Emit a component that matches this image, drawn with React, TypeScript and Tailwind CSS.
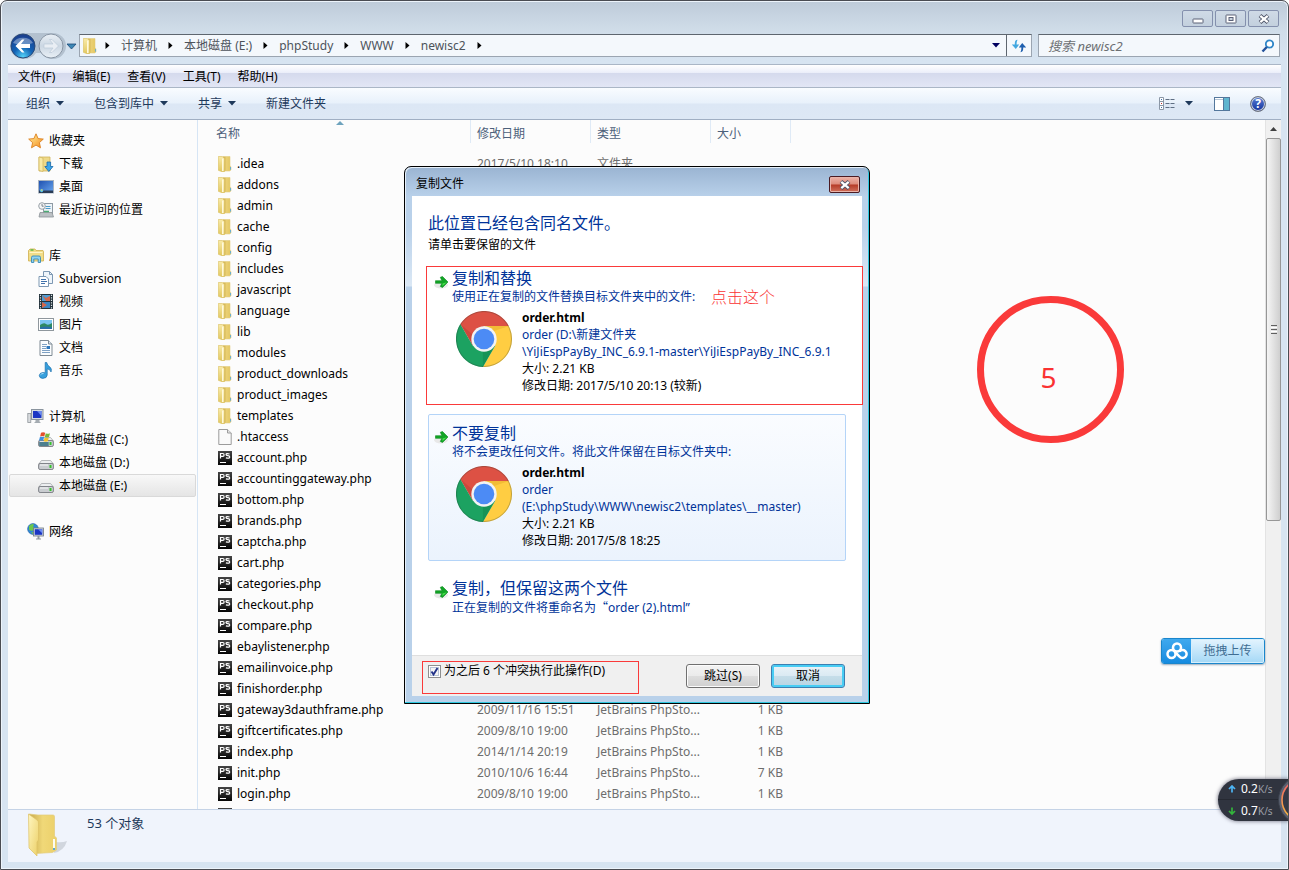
import React from "react";

type NavItem = { label: string; icon: React.ReactNode; child?: boolean; selected?: boolean };
type FileRow = { name: string; kind: "folder" | "blank" | "php"; date?: string; type?: string; size?: string };

const Caret = ({ className = "" }: { className?: string }) => (
  <svg className={className} width="8" height="5" viewBox="0 0 8 5" aria-hidden="true">
    <path d="M0 0h8L4 4.5z" fill="currentColor" />
  </svg>
);

const Crumb = () => (
  <svg width="5" height="7" viewBox="0 0 5 7" aria-hidden="true">
    <path d="M0.5 0v7L4.5 3.5z" fill="#000" />
  </svg>
);

const FolderIcon = () => (
  <svg width="14" height="16" viewBox="0 0 14 16" aria-hidden="true">
    <defs>
      <linearGradient id="fold" x1="0" x2="1">
        <stop offset="0" stopColor="#c9a949" />
        <stop offset=".45" stopColor="#ead074" />
        <stop offset="1" stopColor="#e3c55c" />
      </linearGradient>
      <linearGradient id="foldFront" x2="0" y2="1">
        <stop offset="0" stopColor="#f8eaa8" />
        <stop offset="1" stopColor="#e2c860" />
      </linearGradient>
    </defs>
    <path d="M5 .5h7V10l1 .8v3.200l-1.500 1H5z" fill="url(#fold)" stroke="#e2cd80" strokeWidth=".6" />
    <path d="M.3.5h4L6.500 2.500V15.700H4L.3 14.300z" fill="url(#foldFront)" stroke="#d9bd5c" strokeWidth=".6" />
    <path d="M4.800 2.500v12.500" stroke="#fffae0" strokeWidth="1.500" />
    <path d="M12.500 11v2.600" stroke="#6aaed0" strokeWidth="1" />
  </svg>
);

const PhpIcon = () => (
  <svg width="14" height="14" viewBox="0 0 14 14" aria-hidden="true">
    <defs>
      <linearGradient id="php" x2="0" y2="1">
        <stop offset="0" stopColor="#454545" />
        <stop offset="1" stopColor="#050505" />
      </linearGradient>
    </defs>
    <rect width="14" height="14" fill="url(#php)" />
    <path d="M2.500 7.500V2.500h2.300q1.300 0 1.300 1.400T4.800 5.300H2.500M11.600 3q-3.600-1.100-3.600.6 0 .9 1.900 1.100 1.800.2 1.800 1.200 0 1.900-3.800.9" fill="none" stroke="#fff" strokeWidth="1.200" />
    <path d="M2 11.500h6" stroke="#fff" strokeWidth="1" />
  </svg>
);

const BlankIcon = () => (
  <svg width="14" height="16" viewBox="0 0 14 16" aria-hidden="true">
    <path d="M.8.5h8.700L13.200 4v11.500H.8z" fill="#fafafa" stroke="#9c9c9c" />
    <path d="M9.500.5V4h3.700" fill="#e4e4e4" stroke="#9c9c9c" />
  </svg>
);

const StarIcon = () => (
  <svg width="16" height="16" viewBox="0 0 16 16" aria-hidden="true">
    <defs>
      <linearGradient id="star" x2="1" y2="1">
        <stop offset="0" stopColor="#fff3a0" />
        <stop offset="1" stopColor="#f58a1c" />
      </linearGradient>
    </defs>
    <path d="M8 .8l2.100 4.800 5.200.5-3.900 3.500 1.100 5.200L8 12.100l-4.500 2.700 1.100-5.200L.7 6.100l5.200-.5z" fill="url(#star)" stroke="#dd7f1d" strokeWidth=".9" />
  </svg>
);

const DownloadIcon = () => (
  <svg width="16" height="16" viewBox="0 0 16 16" aria-hidden="true">
    <path d="M1 1h11v14H1z" fill="#eed988" stroke="#d0b45a" strokeWidth=".8" />
    <path d="M1 1l4 1v13.500L1 14.500z" fill="#f8eaa6" stroke="#d0b45a" strokeWidth=".7" />
    <path d="M9 6h3.600v4.500H15L10.800 15.500 6.800 10.500H9z" fill="#3ea6ea" stroke="#1768ab" strokeWidth=".8" />
  </svg>
);

const DesktopIcon = () => (
  <svg width="16" height="14" viewBox="0 0 16 14" aria-hidden="true">
    <defs>
      <linearGradient id="desk" x2="1" y2="1">
        <stop offset="0" stopColor="#1d4fae" />
        <stop offset="1" stopColor="#6aa7ef" />
      </linearGradient>
    </defs>
    <rect x=".5" y=".5" width="15" height="12.500" fill="url(#desk)" stroke="#a9b4c0" />
    <path d="M1 10.500h14V13H1z" fill="#2a3c55" />
    <circle cx="3.600" cy="10.600" r="1.600" fill="#58c3e8" />
    <circle cx="3.800" cy="10" r=".8" fill="#f2d14a" />
  </svg>
);

const RecentIcon = () => (
  <svg width="16" height="16" viewBox="0 0 16 16" aria-hidden="true">
    <rect x="5.500" y="1.500" width="9" height="10" fill="#eef3f7" stroke="#8e9aa4" />
    <path d="M7.500 4.500h5M7.500 6.500h5" stroke="#4b9bc9" />
    <path d="M2 10.500h12l1.500 4.500H1z" fill="#bcc1c5" stroke="#8c9297" strokeWidth=".8" />
    <circle cx="4" cy="4" r="3.300" fill="#f5f6f7" stroke="#98a0a6" />
    <path d="M4 2v2.200h1.700" fill="none" stroke="#5e6a73" strokeWidth=".8" />
    <path d="M6 9.500h5" stroke="#4cab74" strokeWidth="1.400" />
  </svg>
);

const LibraryIcon = () => (
  <svg width="16" height="16" viewBox="0 0 16 16" aria-hidden="true">
    <path d="M.5 2.500 2 1h5l1 1.500h7l.5 1V13H.5z" fill="#f1dd88" stroke="#cfae4d" strokeWidth=".8" />
    <path d="M1.500 4.500h13" stroke="#fff6c8" />
    <path d="M2.500 2h3" stroke="#58b947" strokeWidth="1.500" />
    <path d="M3.500 14.500V9.500q0-1.500 1.500-1.500h6q1.500 0 1.500 1.500v5h-2.300V11H5.800v3.500z" fill="#8fd2f0" stroke="#378bb8" strokeWidth=".9" />
  </svg>
);

const SubversionIcon = () => (
  <svg width="16" height="16" viewBox="0 0 16 16" aria-hidden="true">
    <path d="M5.500.5h6l3 3v9h-9z" fill="#eff5fa" stroke="#7d98b3" />
    <path d="M11.500.5v3h3" fill="none" stroke="#7d98b3" />
    <path d="M1 5.500h7l2.500 2.500v7.500H1z" fill="#fff" stroke="#7d98b3" />
    <path d="M3 8.500h5M3 10.500h6M3 12.500h4" stroke="#4172ab" />
  </svg>
);

const VideoIcon = () => (
  <svg width="14" height="15" viewBox="0 0 14 15" aria-hidden="true">
    <rect width="14" height="15" fill="#23323a" />
    <path d="M3 1h8v6H3z" fill="#4e9ed5" />
    <path d="M3 8h8v6H3z" fill="#3a85c2" />
    <path d="M3 1l4 3 4-2v5H7z M3 8l5 3-5 3z" fill="#d3674a" />
    <path d="M1.500.8v14M12.500.8v14" stroke="#dfe6ea" strokeWidth="1.200" strokeDasharray="1.300 1.200" />
  </svg>
);

const PictureIcon = () => (
  <svg width="16" height="13" viewBox="0 0 16 13" aria-hidden="true">
    <rect x=".5" y=".5" width="15" height="12" fill="#fff" stroke="#8f979d" />
    <path d="M2 2h12v9H2z" fill="#7cc6f2" />
    <path d="M2 7q4-3 6-1t6-1v6H2z" fill="#2f8a64" />
    <path d="M2 9.500q6-2 12 0V11H2z" fill="#2a6fa9" />
  </svg>
);

const DocumentIcon = () => (
  <svg width="14" height="16" viewBox="0 0 14 16" aria-hidden="true">
    <path d="M1 .5h8.500l3.500 3.500v11.500H1z" fill="#fbfdfe" stroke="#7e8a94" />
    <path d="M9.500.5V4H13" fill="#dde6ed" stroke="#7e8a94" />
    <path d="M3 4.500h5M3 6.500h4M3 8.500h4M3 10.500h8M3 12.500h8" stroke="#7fa1c4" />
    <path d="M7.500 6h3.500v3H7.500z" fill="#2e78bd" />
  </svg>
);

const MusicIcon = () => (
  <svg width="15" height="17" viewBox="0 0 15 17" aria-hidden="true">
    <path d="M7.200.5h1.500q.5 3 3 4.300 2.600 2 1.300 5.200-.3-2.500-3.800-3.200v6.300q-.2 3.200-4.400 3.300Q1.300 16.300 1.300 13.500q.3-2.900 4-3 1 0 1.900.4z" fill="#37a0dd" stroke="#1a6fae" strokeWidth=".7" />
    <path d="M2.500 12.800q1-1.500 3-1.300" stroke="#aee0fa" fill="none" />
  </svg>
);

const ComputerIcon = () => (
  <svg width="17" height="15" viewBox="0 0 17 15" aria-hidden="true">
    <rect x=".8" y="4.500" width="3" height="9" fill="#d9dcdf" stroke="#8f959a" strokeWidth=".8" />
    <rect x="4.500" y=".5" width="11.500" height="10" fill="#d5dbe2" stroke="#8a949e" />
    <rect x="6" y="2" width="8.500" height="7" fill="#1b36c4" />
    <path d="M10 2h4.500v5z" fill="#6a8af0" />
    <path d="M8.500 11h4v1.500l1.500 1.500H7l1.500-1.500z" fill="#a5acb2" />
  </svg>
);

const DriveBody = () => (
  <>
    <path d="M3.500 5.500h9l3 3.500H.8z" fill="#eceef0" stroke="#a5a8ac" strokeWidth=".8" />
    <rect x=".6" y="8.500" width="14.800" height="6" rx="1.500" fill="#c9ccd0" stroke="#777b80" strokeWidth=".9" />
    <path d="M2 10h8" stroke="#f7f8f9" />
    <rect x="11.500" y="10" width="2" height="3" fill="#37c52c" />
  </>
);

const DriveIcon = () => (
  <svg width="16" height="16" viewBox="0 0 16 16" aria-hidden="true"><DriveBody /></svg>
);

const SystemDriveIcon = () => (
  <svg width="16" height="16" viewBox="0 0 16 16" aria-hidden="true">
    <DriveBody />
    <rect x="1.200" y="10" width="9.500" height="4" fill="#4d7f8e" />
    <path d="M3 .8q2-1 4.200 0L6.300 4.500q-2-.9-4.200 0z" fill="#e5502b" />
    <path d="M7.800 1.200q2 1 4.200 0L11 5q-2 .9-4.200 0z" fill="#79b93c" />
    <path d="M1.900 5.100q2-.9 4.200 0L5.200 8.800q-2-.9-4.200 0z" fill="#3e8fe0" />
    <path d="M6.600 5.500q2 1 4.200 0L9.900 9.200q-2 .9-4.200 0z" fill="#f3c22d" />
  </svg>
);

const NetworkIcon = () => (
  <svg width="17" height="17" viewBox="0 0 17 17" aria-hidden="true">
    <circle cx="6" cy="6" r="5.400" fill="#2f86d8" stroke="#1f5e9f" strokeWidth=".6" />
    <path d="M2 3q3-3 5-1.500L6 4l2 1-3 3-3-1zM4 9l3 .500-1 2z" fill="#6cc84b" />
    <rect x="6.500" y="5" width="10" height="8" fill="#d5dbe2" stroke="#6d7781" strokeWidth=".8" />
    <rect x="7.700" y="6.200" width="7.600" height="5.600" fill="#1b36c4" />
    <path d="M11 6.200h4.300v4z" fill="#6e8df2" />
    <path d="M10.500 13h2v2.500h1.500v1H9v-1h1.500z" fill="#8f979e" />
  </svg>
);

const ChromeIcon = () => (
  <svg width="56" height="56" viewBox="-28 -28 56 56" aria-hidden="true">
    <path d="M-23.700-15A28 28 0 0 1 24.800-13H0L-11.300 6.500z" fill="#dd5144" />
    <path d="M24.800-13A28 28 0 0 1-1.100 28L11.300 6.500 0-13z" fill="#ffcd42" />
    <path d="M-1.100 28A28 28 0 0 1-23.700-15L-11.300 6.500h22.600z" fill="#1ca261" />
    <path d="M-23.700-15-12-5-11.300 6.500z" fill="#b93f32" opacity=".45" />
    <path d="M0-13h24.800L10-8z" fill="#d99e20" opacity=".35" />
    <path d="M11.300 6.500-1.100 28V12z" fill="#11804a" opacity=".45" />
    <circle r="27.500" fill="none" stroke="#2d3b33" strokeOpacity=".3" />
    <circle r="12.700" fill="#f3f3f3" />
    <circle r="10.300" fill="#4c8bf5" />
  </svg>
);

const ArrowIcon = () => (
  <svg width="16" height="14" viewBox="0 0 16 14" aria-hidden="true">
    <ellipse cx="7" cy="10" rx="7" ry="3.500" fill="#e8e8e8" />
    <path d="M1.500 5.700h6.300L6.300 2.300 8.500 1.500 14 7 8.500 12.500 6.300 11.500 7.800 8.300H1.500z" fill="#12a526" stroke="#0a8a1c" strokeWidth=".6" />
    <path d="M8.500 8.500v2.500L12.800 7.200z" fill="#4be04f" />
  </svg>
);

const CloseGlyph = () => (
  <svg width="12" height="10" viewBox="0 0 12 10" aria-hidden="true">
    <path d="M2 1.500 10 8.500M10 1.500 2 8.500" stroke="#4f5568" strokeWidth="4" />
    <path d="M2.300 1.800 9.700 8.200M9.700 1.800 2.300 8.200" stroke="#fff" strokeWidth="2.200" />
  </svg>
);

const navGroups: NavItem[][] = [
  [
    { label: "收藏夹", icon: <StarIcon /> },
    { label: "下载", icon: <DownloadIcon />, child: true },
    { label: "桌面", icon: <DesktopIcon />, child: true },
    { label: "最近访问的位置", icon: <RecentIcon />, child: true },
  ],
  [
    { label: "库", icon: <LibraryIcon /> },
    { label: "Subversion", icon: <SubversionIcon />, child: true },
    { label: "视频", icon: <VideoIcon />, child: true },
    { label: "图片", icon: <PictureIcon />, child: true },
    { label: "文档", icon: <DocumentIcon />, child: true },
    { label: "音乐", icon: <MusicIcon />, child: true },
  ],
  [
    { label: "计算机", icon: <ComputerIcon /> },
    { label: "本地磁盘 (C:)", icon: <SystemDriveIcon />, child: true },
    { label: "本地磁盘 (D:)", icon: <DriveIcon />, child: true },
    { label: "本地磁盘 (E:)", icon: <DriveIcon />, child: true, selected: true },
  ],
  [{ label: "网络", icon: <NetworkIcon /> }],
];

const php = "JetBrains PhpSto...";
const files: FileRow[] = [
  { name: ".idea", kind: "folder", date: "2017/5/10 18:10", type: "文件夹" },
  { name: "addons", kind: "folder" },
  { name: "admin", kind: "folder" },
  { name: "cache", kind: "folder" },
  { name: "config", kind: "folder" },
  { name: "includes", kind: "folder" },
  { name: "javascript", kind: "folder" },
  { name: "language", kind: "folder" },
  { name: "lib", kind: "folder" },
  { name: "modules", kind: "folder" },
  { name: "product_downloads", kind: "folder" },
  { name: "product_images", kind: "folder" },
  { name: "templates", kind: "folder" },
  { name: ".htaccess", kind: "blank" },
  { name: "account.php", kind: "php" },
  { name: "accountinggateway.php", kind: "php" },
  { name: "bottom.php", kind: "php" },
  { name: "brands.php", kind: "php" },
  { name: "captcha.php", kind: "php" },
  { name: "cart.php", kind: "php" },
  { name: "categories.php", kind: "php" },
  { name: "checkout.php", kind: "php" },
  { name: "compare.php", kind: "php" },
  { name: "ebaylistener.php", kind: "php" },
  { name: "emailinvoice.php", kind: "php" },
  { name: "finishorder.php", kind: "php" },
  { name: "gateway3dauthframe.php", kind: "php", date: "2009/11/16 15:51", type: php, size: "1 KB" },
  { name: "giftcertificates.php", kind: "php", date: "2009/8/10 19:00", type: php, size: "1 KB" },
  { name: "index.php", kind: "php", date: "2014/1/14 20:19", type: php, size: "1 KB" },
  { name: "init.php", kind: "php", date: "2010/10/6 16:44", type: php, size: "7 KB" },
  { name: "login.php", kind: "php", date: "2009/8/10 19:00", type: php, size: "1 KB" },
  { name: "", kind: "php" },
];

const crumbs = ["计算机", "本地磁盘 (E:)", "phpStudy", "WWW", "newisc2"];
const menus = ["文件(F)", "编辑(E)", "查看(V)", "工具(T)", "帮助(H)"];

function TitleBar() {
  const btn = "flex h-[17px] w-[31px] items-center justify-center rounded-[2px] border border-[#8490ad] bg-gradient-to-b from-[#cfdae6] to-[#c3d0de]";
  return (
    <div className="flex h-[31px] items-start justify-end gap-[2px] pr-[2px] pt-[9px]">
      <button aria-label="最小化" className={btn}>
        <svg width="12" height="10" viewBox="0 0 12 10"><rect x="1" y="5" width="10" height="4" rx=".5" fill="#fff" stroke="#5a6076" /></svg>
      </button>
      <button aria-label="最大化" className={btn}>
        <svg width="12" height="10" viewBox="0 0 12 10"><rect x="1" y="1" width="10" height="8" rx=".5" fill="#fff" stroke="#5a6076" /><rect x="4" y="3.500" width="4" height="3" fill="#c8d3df" stroke="#5a6076" /></svg>
      </button>
      <button aria-label="关闭" className={btn}><CloseGlyph /></button>
    </div>
  );
}

function AddressBar() {
  return (
    <div className="flex h-[32px] items-start pl-px pr-[1px]">
      <svg className="shrink-0" width="70" height="28" viewBox="0 0 70 28" aria-hidden="true">
        <defs>
          <radialGradient id="back" cx=".5" cy=".95" r=".9">
            <stop offset="0" stopColor="#54d4fa" />
            <stop offset=".45" stopColor="#1263b5" />
            <stop offset="1" stopColor="#1b3f8e" />
          </radialGradient>
          <linearGradient id="fwd" x2="0" y2="1">
            <stop offset="0" stopColor="#eaf0f6" />
            <stop offset=".5" stopColor="#cbd7e3" />
            <stop offset="1" stopColor="#e9f0f6" />
          </linearGradient>
        </defs>
        <path d="M14 1h30a13 13 0 0 1 0 26q-8 0-12-6h-5q-4 6-13 6A13 13 0 0 1 14 1z" fill="#b3c1cf" />
        <circle cx="14" cy="14" r="12" fill="url(#back)" stroke="#2a4a78" />
        <path d="M4 11a11 9 0 0 1 20 0q-10 4-20 0z" fill="#fff" opacity=".35" />
        <path d="M6.500 14 13 7.500h2.500L12 12h9v4h-9l3.500 4.500H13z" fill="#fff" />
        <circle cx="42" cy="14" r="12" fill="url(#fwd)" stroke="#8996a5" />
        <path d="M49.500 14 43 7.500h-2.500L44 12h-9v4h9l-3.500 4.500H43z" fill="#e9eef4" stroke="#bccad8" strokeWidth=".7" />
        <path d="M58 12h9l-4.500 5z" fill="#3c87b5" stroke="#1d4a78" strokeWidth=".8" />
      </svg>
      <div className="mt-[2px] flex h-[23px] min-w-0 flex-1 items-center border border-[#9ba5b1] border-t-[#5e666f] bg-[#f4f8fc] pl-[3px] text-[#4d535b]">
        <FolderIcon />
        <nav className="flex h-full flex-1 items-center gap-[11px] pl-2">
          <Crumb />
          {crumbs.map((c) => (
            <React.Fragment key={c}>
              <button>{c}</button>
              <Crumb />
            </React.Fragment>
          ))}
        </nav>
        <button aria-label="以前的位置" className="px-[6px] text-[#000060]"><Caret /></button>
        <button aria-label="刷新" className="flex h-full w-[25px] items-center justify-center border-l border-[#5e666f]">
          <svg width="16" height="14" viewBox="0 0 16 14">
            <path d="M6.500.8Q3.500 1 3.800 5.500H.8L4.800 10 8.200 5.500H5.600Q5.500 3 6.500.8z" fill="#42a7e0" />
            <path d="M9.500 13.200Q12.500 13 12.200 8.500h3L11.200 4 7.800 8.500h2.600q.1 2.500-.9 4.700z" fill="#1e5fae" />
          </svg>
        </button>
      </div>
      <div className="ml-[6px] mt-[2px] flex h-[23px] w-[242px] items-center border border-[#9ba5b1] border-t-[#5e666f] bg-[#f4f8fc] pl-[9px] pr-1">
        <input aria-label="搜索 newisc2" placeholder="搜索 newisc2" className="min-w-0 flex-1 bg-transparent text-[13px] italic outline-none placeholder:text-[#6c6f73]" />
        <svg width="14" height="14" viewBox="0 0 14 14" aria-hidden="true">
          <circle cx="8.500" cy="5" r="3.700" fill="#fff" stroke="#2f86c8" strokeWidth="1.800" />
          <path d="M5.800 8 1.500 12.500" stroke="#24529b" strokeWidth="2.400" />
        </svg>
      </div>
    </div>
  );
}

function Toolbar() {
  return (
    <div className="flex h-8 shrink-0 items-center border-b border-[#a0afc3] bg-[linear-gradient(#f9fcff_0%,#e8f1fb_48%,#dce7f5_52%,#dde8f5_100%)] pl-[18px] pr-[15px] text-[#1e395b]">
      <button className="mr-[30px] flex items-center gap-[6px]">组织<Caret /></button>
      <button className="mr-[30px] flex items-center gap-[6px]">包含到库中<Caret /></button>
      <button className="mr-[30px] flex items-center gap-[6px]">共享<Caret /></button>
      <button className="flex-none">新建文件夹</button>
      <div className="flex-1" />
      <button aria-label="更改您的视图" className="flex items-center gap-[10px]">
        <svg width="16" height="13" viewBox="0 0 16 13">
          <path d="M.5.5h4v12h-4zM.5 4.500h4M.5 8.500h4" fill="#fff" stroke="#8b97a6" />
          <path d="M2 2.500h1M2 10.500h1" stroke="#3a6fa8" />
          <path d="M2 6.500h1" stroke="#c03030" />
          <path d="M6.500 2.500h9M6.500 6.500h9M6.500 10.500h9" stroke="#5f6f84" strokeDasharray="4 1" />
        </svg>
        <Caret />
      </button>
      <button aria-label="预览窗格" className="ml-[21px]">
        <svg width="16" height="14" viewBox="0 0 16 14">
          <rect x=".5" y=".5" width="15" height="13" fill="#fff" stroke="#53779c" />
          <path d="M1 2.500h9" stroke="#b5c6d7" />
          <rect x="10" y="1" width="5" height="12" fill="#5fb5cf" />
          <path d="M9.500 1v12" stroke="#53779c" />
        </svg>
      </button>
      <button aria-label="获取帮助" className="ml-5 flex h-4 w-4 items-center justify-center rounded-full border border-[#6f7580] bg-gradient-to-b from-[#5b7fd6] to-[#15309b] text-[12px] font-bold leading-none text-white ring-1 ring-inset ring-[#c9d0db]">?</button>
    </div>
  );
}

function Sidebar() {
  return (
    <aside className="flex w-[190px] shrink-0 flex-col gap-[23px] border-r border-[#d6e5f5] pt-[9px]">
      {navGroups.map((group, i) => (
        <ul key={i}>
          {group.map((item) => (
            <li key={item.label} className="px-px">
              <a
                href="#"
                className={
                  "flex h-[23px] items-center gap-[5px] rounded-[2px] border text-black " +
                  (item.child ? "pl-[27px] " : "pl-[17px] ") +
                  (item.selected ? "border-[#d9d9d9] bg-gradient-to-b from-[#f8f8f8] to-[#e5e5e5]" : "border-transparent")
                }
              >
                <span className="flex w-[17px] shrink-0 justify-center">{item.icon}</span>
                {item.label}
              </a>
            </li>
          ))}
        </ul>
      ))}
    </aside>
  );
}

function FileList() {
  const th = "relative h-[23px] border-r border-[#dfeaf6] pt-1 text-left align-middle font-normal";
  return (
    <div className="min-w-0 flex-1 overflow-hidden">
      <table className="w-full table-fixed border-separate border-spacing-0">
        <colgroup>
          <col className="w-[273px]" />
          <col className="w-[120px]" />
          <col className="w-[120px]" />
          <col className="w-[80px]" />
          <col />
        </colgroup>
        <thead className="text-[#4c607a]">
          <tr>
            <th className={th + " pl-[18px]"}>
              名称
              <svg className="absolute left-[138px] top-px" width="8" height="4" viewBox="0 0 8 4" aria-hidden="true"><path d="M0 4h8L4 0z" fill="#6ea3bd" /></svg>
            </th>
            <th className={th + " pl-[6px]"}>修改日期</th>
            <th className={th + " pl-[6px]"}>类型</th>
            <th className={th + " pl-[6px]"}>大小</th>
            <td />
          </tr>
        </thead>
        <tbody className="text-[#6d6d6d]">
          <tr aria-hidden="true"><td className="h-[10px]" colSpan={5} /></tr>
          {files.map((f, i) => (
            <tr key={i}>
              <td className="h-[21px] p-0">
                <div className="flex h-[21px] items-center gap-[5px] pl-5 text-black">
                  {f.kind === "folder" ? <FolderIcon /> : f.kind === "php" ? <PhpIcon /> : <BlankIcon />}
                  {f.name}
                </div>
              </td>
              <td className="whitespace-nowrap p-0 pl-[6px]">{f.date}</td>
              <td className="whitespace-nowrap p-0 pl-[6px]">{f.type}</td>
              <td className="p-0 pr-2 text-right">{f.size}</td>
              <td />
            </tr>
          ))}
        </tbody>
      </table>
    </div>
  );
}

function Scrollbar() {
  return (
    <div className="flex w-4 shrink-0 flex-col border-l border-[#e3e3e3] bg-[#f0f0f0]" aria-hidden="true">
      <div className="flex h-[18px] items-center justify-center">
        <svg width="7" height="4" viewBox="0 0 7 4"><path d="M0 4h7L3.500 0z" fill="#404040" /></svg>
      </div>
      <div className="flex h-[383px] flex-col items-center justify-center gap-px rounded-[2px] border border-[#979797] bg-gradient-to-r from-[#f5f5f5] to-[#cfcfcf]">
        <span className="h-px w-[6px] bg-[#606060]" />
        <span className="h-px w-[6px] bg-white" />
        <span className="h-px w-[6px] bg-[#606060]" />
        <span className="h-px w-[6px] bg-white" />
        <span className="h-px w-[6px] bg-[#606060]" />
      </div>
    </div>
  );
}

type OptionProps = { title: string; desc: React.ReactNode; path?: string[]; modified?: string; className?: string };

function CopyOption({ title, desc, path, modified, className = "" }: OptionProps) {
  return (
    <button className={"flex w-full items-start rounded-[2px] border pt-2 text-left text-[#003399] " + className}>
      <span className="w-[23px] shrink-0 pl-[5px] pt-[7px]"><ArrowIcon /></span>
      <span className="block min-w-0 flex-1">
        <span className="block text-base leading-5">{title}</span>
        <span className="block leading-[18px]">{desc}</span>
        {path && (
          <span className="flex gap-[10px] pb-[11px] pl-1 pt-[3px] leading-[17px]">
            <span className="mt-[2px] block shrink-0"><ChromeIcon /></span>
            <span className="block whitespace-nowrap">
              <b className="block text-black">order.html</b>
              {path.map((p) => <span key={p} className="block">{p}</span>)}
              <span className="block text-black">大小: 2.21 KB</span>
              <span className="block text-black">修改日期: {modified}</span>
            </span>
          </span>
        )}
      </span>
    </button>
  );
}

function CopyDialog() {
  return (
    <section
      role="dialog"
      aria-labelledby="copy-title"
      className="absolute left-[403px] top-[165px] flex w-[466px] flex-col rounded-t-[7px] border border-black bg-[linear-gradient(#9ab4d2_0px,#b9d1ea_30px,#b9d1ea_60px,#dbe8f5_119px,#b9d1ea_120px)] px-[7px] pb-[7px] shadow-[inset_-1px_-1px_0_#2fc8e0,inset_1px_1px_0_#e6f0fa]"
    >
      <header className="flex h-[29px] items-start justify-between pl-[4px] pr-[2px]">
        <h1 id="copy-title" className="pt-2 leading-[18px] text-black">复制文件</h1>
        <button aria-label="关闭" className="mt-[9px] flex h-[17px] w-[31px] items-center justify-center rounded-[2px] border border-[#4b1b22] bg-[linear-gradient(#eeb3a8_0%,#dd8b7b_48%,#b53b27_52%,#d0705c_100%)] shadow-[inset_0_0_0_1px_#e9b4aa]">
          <CloseGlyph />
        </button>
      </header>
      <div className="bg-white px-4 pt-4">
        <h2 className="text-base leading-[22px] text-[#003399]">此位置已经包含同名文件。</h2>
        <p className="pt-[2px] leading-[18px] text-black">请单击要保留的文件</p>
        <div className="mt-[5px] flex flex-col gap-2">
          <CopyOption
            className="border-transparent"
            title="复制和替换"
            desc="使用正在复制的文件替换目标文件夹中的文件:"
            path={["order (D:\\新建文件夹", "\\YiJiEspPayBy_INC_6.9.1-master\\YiJiEspPayBy_INC_6.9.1"]}
            modified="2017/5/10 20:13 (较新)"
          />
          <CopyOption
            className="border-[#b4d4f8] bg-gradient-to-b from-[#fafcff] to-[#ebf3fd]"
            title="不要复制"
            desc="将不会更改任何文件。将此文件保留在目标文件夹中:"
            path={["order", "(E:\\phpStudy\\WWW\\newisc2\\templates\\__master)"]}
            modified="2017/5/8 18:25"
          />
          <CopyOption
            className="border-transparent pb-[37px]"
            title="复制，但保留这两个文件"
            desc={<>正在复制的文件将重命名为<span className="font-['Noto_Sans_CJK_SC']">“</span>order (2).html”</>}
          />
        </div>
      </div>
      <footer className="flex h-[41px] items-start border-t border-[#dfdfdf] bg-[#f0f0f0] pl-4 pr-[17px] pt-[7px]">
        <label className="flex items-center gap-[3px] leading-4 text-black">
          <span className="grid">
            <input type="checkbox" defaultChecked className="peer col-start-1 row-start-1 h-[13px] w-[13px] appearance-none border border-[#8e8f8f] bg-[#f4f4f4] shadow-[inset_0_0_0_1px_#fff,inset_0_0_0_2px_#b7c4d6]" />
            <svg className="pointer-events-none invisible col-start-1 row-start-1 peer-checked:visible" width="13" height="13" viewBox="0 0 13 13" aria-hidden="true"><path d="M3.500 6.500 5.500 9.500 9.500 3" fill="none" stroke="#24348a" strokeWidth="1.900" /></svg>
          </span>
          为之后 6 个冲突执行此操作(D)
        </label>
        <div className="ml-auto flex gap-[11px] pt-px text-black">
          <button className="h-6 w-[74px] rounded-[3px] border border-[#707070] bg-[linear-gradient(#f3f3f3_0%,#ebebeb_48%,#dddddd_52%,#cfcfcf_100%)] shadow-[inset_0_0_0_1px_#fcfcfc]">跳过(S)</button>
          <button className="h-6 w-[74px] rounded-[3px] border border-[#3c7fb1] bg-[linear-gradient(#eaf3f8_0%,#dbeaf3_48%,#c5dde9_52%,#b8d4e3_100%)] shadow-[inset_0_0_0_2px_#48cdf4]">取消</button>
        </div>
      </footer>
    </section>
  );
}

function Annotations() {
  return (
    <>
      <div className="pointer-events-none absolute left-[425px] top-[265px] h-[139px] w-[437px] border border-[#fa3a3a]" />
      <div className="pointer-events-none absolute left-[421px] top-[660px] h-[33px] w-[217px] border border-[#fa3a3a]" />
      <p className="absolute left-[710px] top-[284px] text-base font-light leading-6 text-[#fa3232]">点击这个</p>
      <div className="absolute left-[976px] top-[295px] flex h-[147px] w-[147px] items-center justify-center rounded-full border-[7px] border-[#fa3a3a]">
        <span className="pr-[4px] pt-[14px] text-[28px] leading-8 text-[#fa3232]">5</span>
      </div>
    </>
  );
}

function UploadWidget() {
  return (
    <button className="absolute right-[23px] top-[637px] flex h-[26px] w-[104px] overflow-hidden rounded-[3px] border border-[#1a86cc] bg-gradient-to-b from-[#e4f4fe] to-[#a4d8f6] text-[#3f6d92] shadow-[0_1px_2px_#9ab]">
      <span className="flex h-full w-[29px] items-center justify-center bg-gradient-to-b from-[#3fa9ee] to-[#148be0]">
        <svg width="22" height="18" viewBox="0 0 22 18" fill="none" stroke="#fff" strokeWidth="2.500" aria-hidden="true">
          <circle cx="11" cy="5.500" r="4" />
          <circle cx="5.500" cy="12" r="4" />
          <path d="M13.500 9.500a4 4 0 1 1 0 5L8.500 9.500" />
        </svg>
      </span>
      <span className="flex h-full flex-1 items-center justify-center border border-[#d6effc]">拖拽上传</span>
    </button>
  );
}

function SpeedWidget() {
  const row = "flex h-[21px] items-center pl-[10px] leading-none text-white";
  return (
    <div className="absolute -right-px top-[778px] h-[42px] w-[71px]">
      <div className="h-full overflow-hidden rounded-l-[21px] bg-[#30343f] shadow-[0_0_4px_#667]">
        <div className={row + " border-b border-[#262932]"}>
          <svg className="mr-[5px]" width="8" height="8" viewBox="0 0 8 8" aria-hidden="true"><path d="M4 7.500V1.500M1 4l3-3 3 3" fill="none" stroke="#4db5f5" strokeWidth="1.700" /></svg>
          0.2<span className="text-[10px] text-[#9a9da6]">K/s</span>
        </div>
        <div className={row}>
          <svg className="mr-[5px]" width="8" height="8" viewBox="0 0 8 8" aria-hidden="true"><path d="M4 .5v6M1 4l3 3 3-3" fill="none" stroke="#33b53c" strokeWidth="1.700" /></svg>
          0.7<span className="text-[10px] text-[#9a9da6]">K/s</span>
        </div>
      </div>
      <svg className="absolute right-0 top-[-4px]" width="11" height="50" viewBox="0 0 11 50" aria-hidden="true">
        <defs>
          <linearGradient id="ring" x2="0" y2="1">
            <stop offset="0" stopColor="#ef5a6a" />
            <stop offset="1" stopColor="#f5c23c" />
          </linearGradient>
        </defs>
        <circle cx="25" cy="25" r="24.500" fill="#5a6070" stroke="#3b404c" />
        <circle cx="25" cy="25" r="21" fill="#343946" stroke="url(#ring)" strokeWidth="1.600" />
      </svg>
    </div>
  );
}

export default function App() {
  return (
    <div className="relative flex h-screen flex-col overflow-hidden rounded-t-[7px] border border-[#4a4c52] bg-[linear-gradient(#becbd9_0px,#d0dde9_30px,#d7e4f1_60px)] px-[7px] pb-[7px] font-['Noto_Sans','Noto_Sans_CJK_SC',sans-serif] text-[12px] leading-[18px] shadow-[inset_0_0_0_1px_#edf4fb]">
      <TitleBar />
      <AddressBar />
      <div className="flex h-6 shrink-0 items-center gap-[17px] border-y border-[#aab6c6] bg-[linear-gradient(#ffffff_0%,#eceffa_34%,#d5daed_38%,#e2e6f5_100%)] pl-[10px] pt-[2px] text-black">
        {menus.map((m) => <button key={m}>{m}</button>)}
      </div>
      <Toolbar />
      <main className="flex min-h-0 flex-1 bg-[#fcfcfc]">
        <Sidebar />
        <FileList />
        <Scrollbar />
      </main>
      <footer className="flex h-[53px] shrink-0 items-start border-t border-[#c5d3e6] bg-[#f0f4fc] pl-[18px] text-[#1e395b]">
        <svg className="mt-[2px]" width="42" height="48" viewBox="0 0 42 48" aria-hidden="true">
          <defs>
            <linearGradient id="bigBack" x1="0" x2="1">
              <stop offset="0" stopColor="#c7a94c" />
              <stop offset=".5" stopColor="#f0d878" />
              <stop offset="1" stopColor="#ecd06a" />
            </linearGradient>
            <linearGradient id="bigFront" x2="1" y2="1">
              <stop offset="0" stopColor="#fff6c0" />
              <stop offset="1" stopColor="#ecd067" />
            </linearGradient>
          </defs>
          <path d="M28 41q10-2 13-12-5 2-11 1z" fill="#c3c9d2" opacity=".7" />
          <path d="M3 2l9 1h15q1.500 0 1.500 1.500V24l2 2v12l-4 2.500-17 1z" fill="url(#bigBack)" stroke="#e3cc7c" strokeWidth=".7" />
          <path d="M2.500 2 11 8q1.500 1 1.500 3v17l-1.500 2v14L3 36z" fill="url(#bigFront)" stroke="#dec265" strokeWidth=".7" />
          <path d="M28 27v9" stroke="#fff" strokeWidth="1.800" />
          <path d="M28 36v2" stroke="#50a5d8" strokeWidth="1.800" />
        </svg>
        <span className="pl-[19px] pt-1 text-[13px]">53 个对象</span>
      </footer>
      <CopyDialog />
      <Annotations />
      <UploadWidget />
      <SpeedWidget />
    </div>
  );
}
